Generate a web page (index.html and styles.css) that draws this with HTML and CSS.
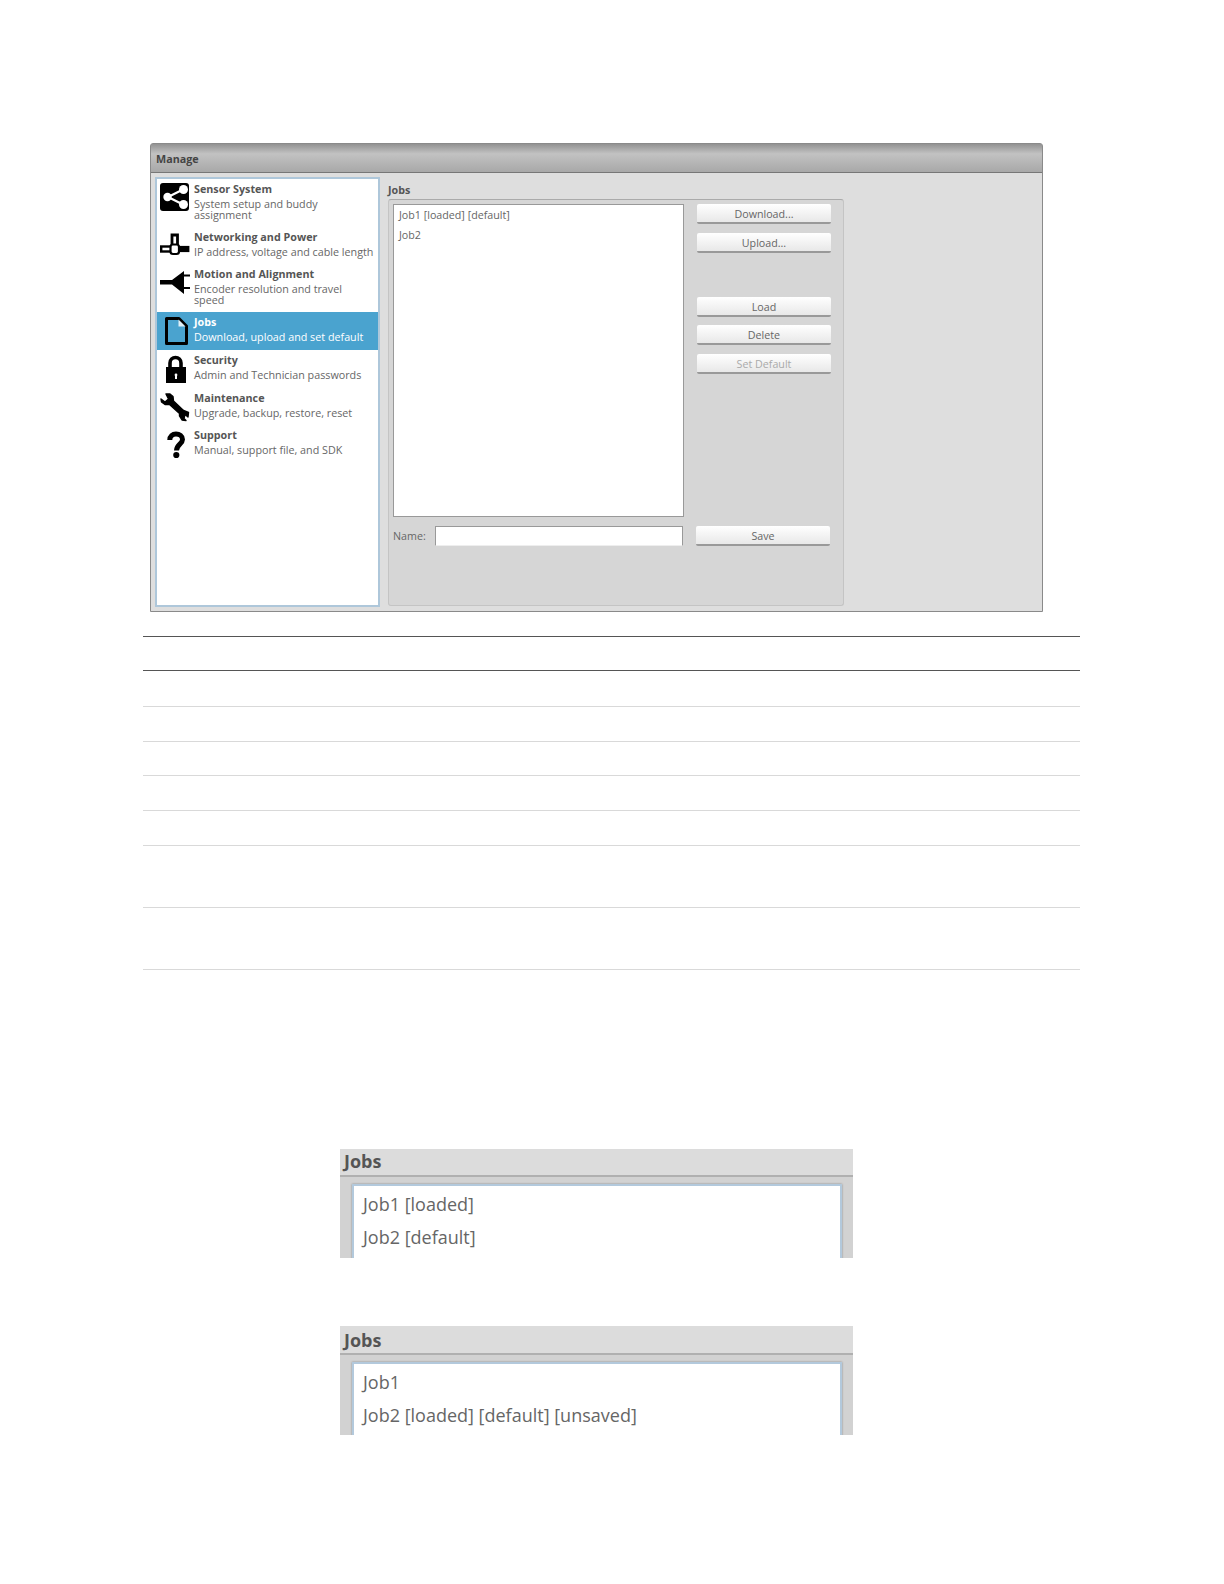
FILE: index.html
```html
<!DOCTYPE html>
<html lang="en">
<head>
<meta charset="utf-8">
<title>Manage Jobs</title>
<link rel="stylesheet" href="styles.css">
</head>
<body>
<main class="page">
  <section class="window">
    <header class="titlebar">Manage</header>
    <div class="window-body">
      <nav class="sidebar">
        <div class="item item-sensor">
          <svg class="icon" viewBox="0 0 30 30"><rect x="0" y="1" width="29" height="28" rx="3" fill="#000"/><path d="M8 15 23 7.500M8 15 23 22.500" stroke="#fff" stroke-width="2.200"/><circle cx="7.500" cy="15" r="4.200" fill="#fff"/><circle cx="23.500" cy="7.500" r="4.500" fill="#fff"/><circle cx="23.500" cy="22.500" r="4.500" fill="#fff"/></svg>
          <div class="text"><div class="name">Sensor System</div><div class="desc">System setup and buddy<br>assignment</div></div>
        </div>
        <div class="item item-net">
          <svg class="icon" viewBox="0 0 30 30"><path d="M12 13V3h5.500V13" fill="#fff" stroke="#000" stroke-width="2.800"/><rect x="1.200" y="14.500" width="10" height="5" fill="#fff" stroke="#000" stroke-width="2.400"/><rect x="18.500" y="14.800" width="10" height="4.400" fill="#000" stroke="#000" stroke-width="1.800"/><rect x="10.500" y="12.500" width="8.500" height="9.500" rx="2.500" fill="#fff" stroke="#000" stroke-width="2.200"/></svg>
          <div class="text"><div class="name">Networking and Power</div><div class="desc">IP address, voltage and cable length</div></div>
        </div>
        <div class="item item-motion">
          <svg class="icon" viewBox="0 0 30 30"><path d="M0 13H12L24 4V7.500H30V9.500H24V20H30V22H24V27L12 17.500H0z" fill="#000"/></svg>
          <div class="text"><div class="name">Motion and Alignment</div><div class="desc">Encoder resolution and travel<br>speed</div></div>
        </div>
        <div class="item item-jobs active">
          <svg class="icon" viewBox="0 0 30 30"><path d="M6.500 2.500H19L26.500 10V27.500H6.500z" fill="#4aa3cf" stroke="#000" stroke-width="3" stroke-linejoin="round"/><path d="M18.500 3.500V10.500H25.500z" fill="#dff0f8"/></svg>
          <div class="text"><div class="name">Jobs</div><div class="desc">Download, upload and set default</div></div>
        </div>
        <div class="item item-sec">
          <svg class="icon" viewBox="0 0 30 30"><path d="M10 14V9a5.500 5.500 0 0 1 11 0v5" fill="none" stroke="#000" stroke-width="3.600"/><rect x="6" y="13" width="20" height="16" fill="#000"/><rect x="15" y="21" width="2" height="4" fill="#fff"/><circle cx="16" cy="21" r="1.400" fill="#fff"/></svg>
          <div class="text"><div class="name">Security</div><div class="desc">Admin and Technician passwords</div></div>
        </div>
        <div class="item item-maint">
          <svg class="icon" viewBox="0 0 30 30"><path d="M1 7 5 10 8.500 7 6 2 10 2 13 4.500 13.500 9 23.500 18.500 28.500 20.500 28 25 25 22.500 24 26.500 26 28.500 22 28 19.500 24 19.500 21.500 9.500 12.500 5 12.500 1.500 10z" fill="#000" stroke="#000" stroke-width="1.400" stroke-linejoin="round"/></svg>
          <div class="text"><div class="name">Maintenance</div><div class="desc">Upgrade, backup, restore, reset</div></div>
        </div>
        <div class="item item-sup">
          <svg class="icon" viewBox="0 0 30 30"><path d="M9.800 11C9.800 7 12.500 5 16 5 19.500 5 22.500 7 22.500 10.500 22.500 15 16.500 15.500 16.500 21.500" fill="none" stroke="#000" stroke-width="5"/><circle cx="16.300" cy="26" r="3.100" fill="#000"/></svg>
          <div class="text"><div class="name">Support</div><div class="desc">Manual, support file, and SDK</div></div>
        </div>
      </nav>
      <div class="content">
        <h2 class="heading">Jobs</h2>
        <div class="panel">
          <div class="main-row">
            <div class="list">
              <div class="job">Job1 [loaded] [default]</div>
              <div class="job">Job2</div>
            </div>
            <div class="buttons">
              <button class="btn">Download...</button>
              <button class="btn">Upload...</button>
              <button class="btn btn-load">Load</button>
              <button class="btn">Delete</button>
              <button class="btn btn-off">Set Default</button>
            </div>
          </div>
          <div class="name-row">
            <label class="name-label">Name:</label>
            <div class="name-input"></div>
            <button class="btn btn-save">Save</button>
          </div>
        </div>
      </div>
    </div>
  </section>

  <div class="rows">
    <div class="row row-head"></div>
    <div class="row h36"></div>
    <div class="row h35"></div>
    <div class="row h34"></div>
    <div class="row h35"></div>
    <div class="row h35"></div>
    <div class="row h62"></div>
    <div class="row h62"></div>
  </div>

  <figure class="crop crop-a">
    <div class="crop-head">Jobs</div>
    <div class="crop-panel"><div class="crop-list">
      <div class="crop-job">Job1 [loaded]</div>
      <div class="crop-job">Job2 [default]</div>
    </div></div>
  </figure>
  <figure class="crop crop-b">
    <div class="crop-head">Jobs</div>
    <div class="crop-panel"><div class="crop-list">
      <div class="crop-job">Job1</div>
      <div class="crop-job">Job2 [loaded] [default] [unsaved]</div>
    </div></div>
  </figure>
</main>
</body>
</html>
```
FILE: styles.css
```css
* { box-sizing: border-box; }
html, body { margin: 0; background: #fff; }
body { font-family: "Open Sans", "Liberation Sans", sans-serif; color: #555; }
.page { width: 1224px; height: 1584px; padding-top: 143px; overflow: hidden; }

.window { width: 893px; height: 469px; margin-left: 150px; border: 1px solid #8a8a8a; border-radius: 3px 3px 0 0; background: #dedede; display: flex; flex-direction: column; }
.titlebar { height: 29px; flex: none; padding: 8px 0 0 5px; font-size: 10.75px; line-height: 14px; font-weight: 700; color: #444; background: linear-gradient(#929292, #c2c2c2 35%, #a8a8a8); border-bottom: 1px solid #777; }
.window-body { flex: 1; display: flex; padding: 4px 0 0 4px; min-height: 0; }

.sidebar { width: 225px; height: 430px; border: 2px solid #aec7da; background: #fff; flex: none; }
.item { display: flex; padding-left: 3px; }
.item-sensor { height: 48px; }
.item-net { height: 37px; }
.item-motion { height: 48px; }
.item-jobs { height: 38px; }
.item-sec { height: 38px; }
.item-maint { height: 37px; }
.item-sup { height: 37px; }
.active { background: #4aa3cf; }
.active .name, .active .desc { color: #fff; }
.icon { width: 30px; height: 30px; flex: none; }
.item-sensor .icon { margin-top: 3px; }
.item-net .icon { margin-top: 5px; }
.item-motion .icon { margin-top: 3px; }
.item-jobs .icon, .item-sec .icon, .item-maint .icon, .item-sup .icon { margin-top: 4px; }
.text { margin-left: 4px; padding-top: 3px; }
.name { font-size: 10.75px; line-height: 15px; font-weight: 700; color: #555; }
.desc { font-size: 10.75px; line-height: 10.5px; color: #666; padding-top: 2px; white-space: nowrap; }

.content { margin-left: 8px; width: 456px; }
.heading { margin: 0; height: 22px; padding-top: 6px; font-size: 10.7px; line-height: 14px; font-weight: 700; color: #555; }
.panel { height: 407px; background: #d6d6d6; border: 1px solid #c4c4c4; border-top-color: #aaa; border-radius: 3px; padding: 4px 4px 0; }
.main-row { display: flex; height: 313px; }
.list { width: 291px; height: 313px; background: #fff; border: 1px solid #999; padding: 0 5px; }
.job { height: 20px; font-size: 10.7px; line-height: 20px; color: #666; }
.buttons { margin-left: 13px; width: 134px; display: flex; flex-direction: column; gap: 8.5px; }
.btn { display: block; width: 134px; height: 20px; padding: 1px 0 0; font: 400 10.7px/18px "Open Sans", sans-serif; color: #666; background: linear-gradient(#fff, #e8e8e8); border: 0; border-bottom: 2px solid #999; border-radius: 2px; }
.btn-load { margin-top: 35.5px; }
.btn-off { color: #aaa; }
.name-row { display: flex; align-items: center; height: 20px; margin-top: 9px; }
.name-label { width: 42px; font-size: 10.7px; color: #666; }
.name-input { width: 248px; height: 20px; background: #fff; border: 1px solid #999; border-bottom-color: #eee; }
.btn-save { margin-left: 13px; }

.rows { margin: 24px 0 0 143px; width: 937px; }
.row { border-bottom: 1px solid #d9d9d9; }
.row-head { height: 35px; border-top: 1px solid #555; border-bottom-color: #555; }
.h34 { height: 34px; }
.h35 { height: 35px; }
.h36 { height: 36px; }
.h62 { height: 62px; }

.crop { margin: 0 0 0 340px; width: 513px; height: 109px; background: #d2d2d2; overflow: hidden; }
.crop-a { margin-top: 179px; }
.crop-b { margin-top: 68px; }
.crop-head { height: 29px; padding: 2px 0 0 4px; font-size: 18px; line-height: 24px; font-weight: 700; color: #555; background: #dcdcdc; border-bottom: 2px solid #b0b0b0; }
.crop-a .crop-head { height: 28px; padding-top: 0; }
.crop-panel { height: 80px; padding: 7px 0 0 12px; }
.crop-list { width: 490px; height: 90px; background: #fff; border: 2px solid #b3c9dc; box-shadow: 0 0 2px #888; padding: 2px 9px; }
.crop-job { height: 33px; font-size: 18px; line-height: 32px; color: #666; }
```
